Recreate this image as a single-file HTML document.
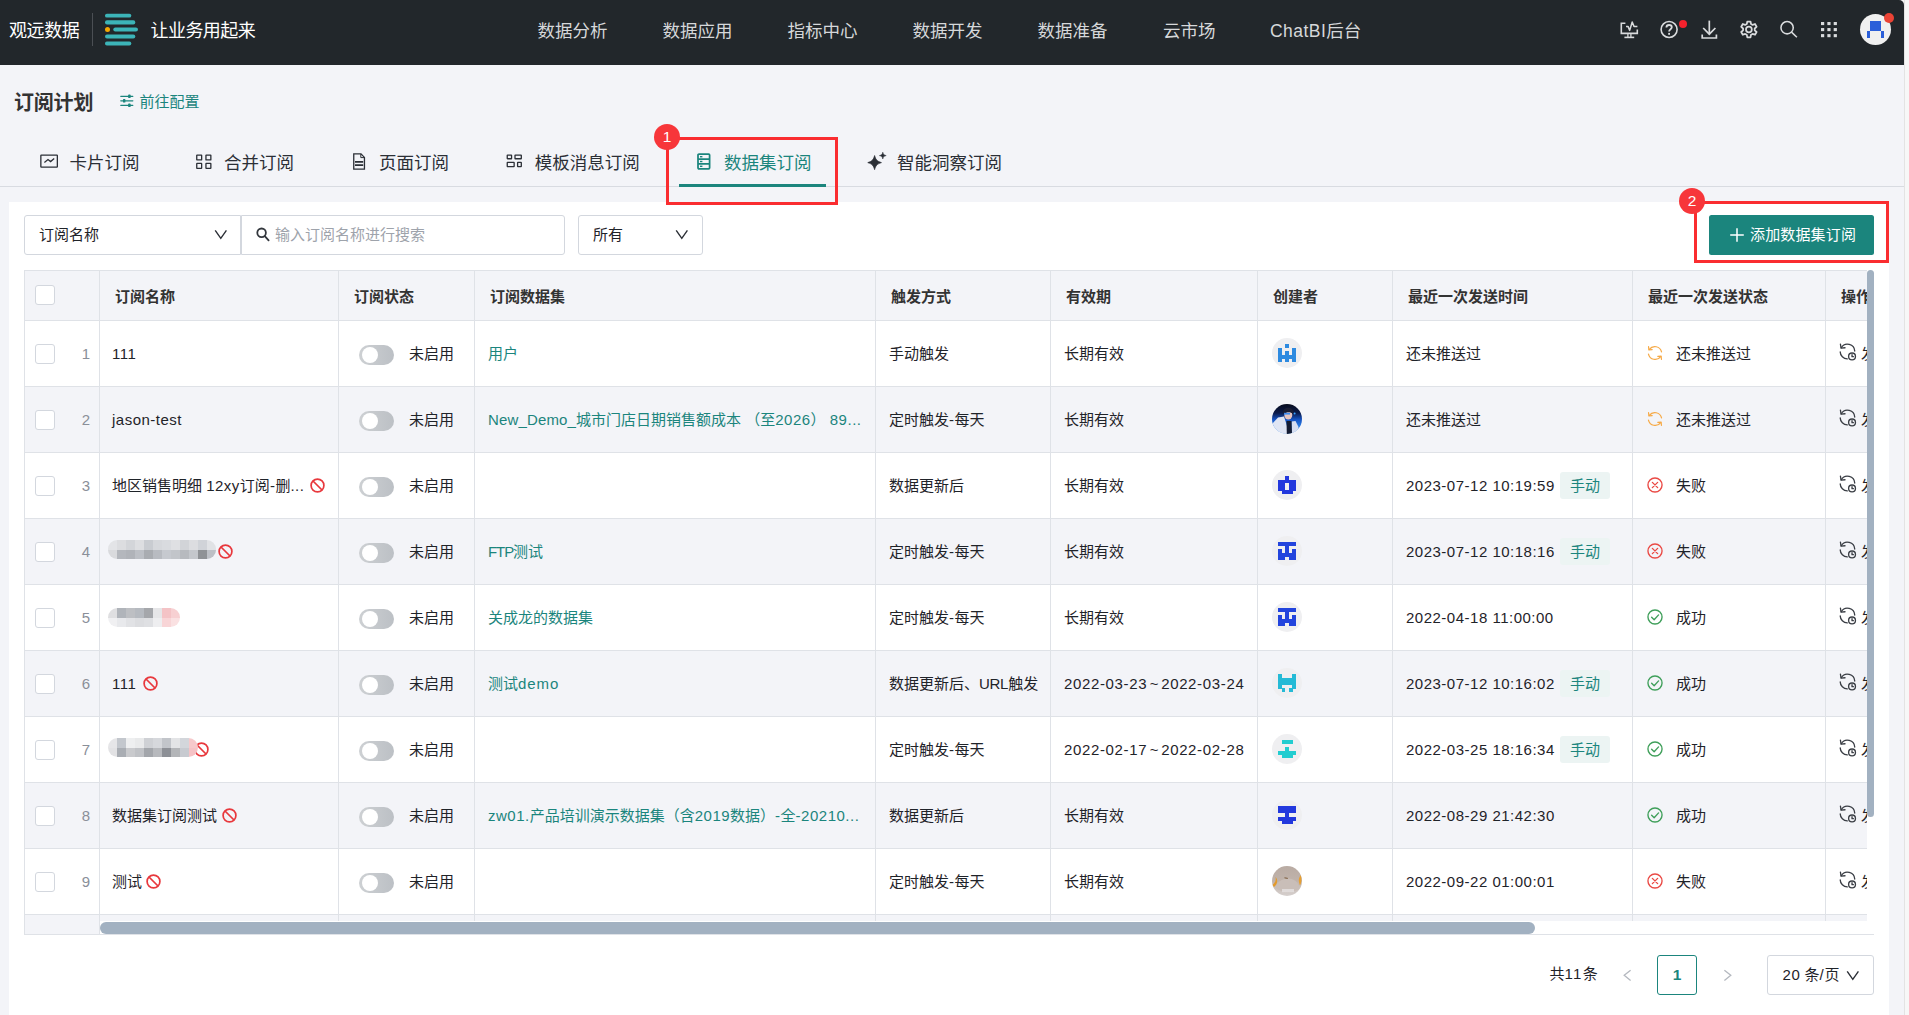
<!DOCTYPE html>
<html lang="zh-CN">
<head>
<meta charset="utf-8">
<title>订阅计划</title>
<style>
html,body{margin:0;padding:0;}
body{width:1909px;height:1015px;overflow:hidden;background:#f7f7f7;font-family:"Liberation Sans", "Noto Sans CJK SC", sans-serif;position:relative;}
.a{position:absolute;box-sizing:border-box;}
.t{position:absolute;white-space:nowrap;}
#page{position:absolute;left:0;top:0;width:1904px;height:1015px;background:#f3f4f8;overflow:hidden;border-top-right-radius:5px;}
#edge{position:absolute;left:1904px;top:0;width:1px;height:1015px;background:#e3e3e3;}
</style>
</head>
<body>
<div id="page">
<div class="a" style="left:0px;top:0px;width:1904px;height:65px;background:#22272b;"></div>
<span class="t" style="left:9px;top:19.50px;font-size:18px;line-height:22px;color:#ffffff;letter-spacing:-0.4px;">观远数据</span>
<div class="a" style="left:92px;top:13px;width:1px;height:33px;background:#4b4f54;"></div>
<svg class="a" style="left:104px;top:13px;" width="35" height="34" viewBox="0 0 35 34" fill="none"><g fill="#3cb4b8"><rect x="1" y="0.7" width="26.3" height="3.9" rx="1.9"/><rect x="1" y="7.3" width="30.3" height="4.1" rx="2"/><rect x="9.3" y="14.4" width="24.7" height="4.2" rx="2.1"/><rect x="1" y="21.5" width="30.3" height="4.1" rx="2"/><rect x="1" y="28.6" width="26.3" height="3.9" rx="1.9"/></g><circle cx="3.5" cy="16.5" r="2.5" fill="#f6a800"/></svg>
<span class="t" style="left:150.5px;top:19.50px;font-size:18px;line-height:22px;color:#ffffff;letter-spacing:-0.55px;">让业务用起来</span>
<span class="t" style="left:537.5px;top:19.50px;font-size:17.5px;line-height:22px;color:#d6d8da;">数据分析</span>
<span class="t" style="left:662.5px;top:19.50px;font-size:17.5px;line-height:22px;color:#d6d8da;">数据应用</span>
<span class="t" style="left:787.5px;top:19.50px;font-size:17.5px;line-height:22px;color:#d6d8da;">指标中心</span>
<span class="t" style="left:912.5px;top:19.50px;font-size:17.5px;line-height:22px;color:#d6d8da;">数据开发</span>
<span class="t" style="left:1037.5px;top:19.50px;font-size:17.5px;line-height:22px;color:#d6d8da;">数据准备</span>
<span class="t" style="left:1163px;top:19.50px;font-size:17.5px;line-height:22px;color:#d6d8da;">云市场</span>
<span class="t" style="left:1270px;top:19.50px;font-size:17.5px;line-height:22px;color:#d6d8da;"><span style="letter-spacing:.45px">ChatBI</span>后台</span>
<svg class="a" style="left:1619px;top:20px;" width="21" height="20" viewBox="0 0 21 20" fill="none"><g stroke="#d9dbdd" stroke-width="1.6" fill="none" stroke-linecap="butt" stroke-linejoin="miter"><path d="M6.4 3.2H2.3V13.4H18.3V9.6"/><path d="M8.9 13.6V17M11.9 13.6V17" stroke-width="1.3"/><path d="M5.4 17.4H15.2"/><path d="M7 6.4H9L10.7 10.4L13.2 2L15 6.4H18.4" stroke-width="1.5" stroke-linejoin="round"/></g></svg>
<svg class="a" style="left:1659px;top:20px;" width="21" height="20" viewBox="0 0 21 20" fill="none"><circle cx="10.1" cy="9.5" r="8" stroke="#d9dbdd" stroke-width="1.6"/><path d="M7.4 7.5C7.4 5.9 8.6 5 10.1 5C11.7 5 12.8 5.9 12.8 7.3C12.8 9.1 10.1 9.4 10.1 11.5" stroke="#d9dbdd" stroke-width="1.8" fill="none" stroke-linecap="butt"/><rect x="9.2" y="12.9" width="1.8" height="1.9" fill="#d9dbdd"/></svg>
<div class="a" style="left:1679px;top:20px;width:8px;height:8px;background:#f5222d;border-radius:50%;"></div>
<svg class="a" style="left:1700px;top:19px;" width="19" height="21" viewBox="0 0 19 21" fill="none"><g stroke="#d9dbdd" stroke-width="1.7" fill="none" stroke-linecap="butt" stroke-linejoin="miter"><path d="M9.3 1.6V15"/><path d="M3.2 9L9.3 15.2L15.4 9"/><path d="M2.2 15.4V19H16.4V15.4"/></g></svg>
<svg class="a" style="left:1739px;top:20px;" width="20" height="20" viewBox="0 0 20 20" fill="none"><g stroke="#d9dbdd" stroke-width="1.75" fill="none" stroke-linejoin="round"><path d="M8.3 1.5h3.2l.5 2.5 1.6.9 2.4-.9 1.6 2.8-1.9 1.7v1.8l1.9 1.7-1.6 2.8-2.4-.9-1.6.9-.5 2.5H8.3l-.5-2.5-1.6-.9-2.4.9-1.6-2.8 1.9-1.7V8.5L2.2 6.8l1.6-2.8 2.4.9 1.6-.9z"/><circle cx="9.9" cy="9.4" r="2.9"/></g></svg>
<svg class="a" style="left:1779px;top:20px;" width="20" height="20" viewBox="0 0 20 20" fill="none"><g stroke="#d9dbdd" stroke-width="1.55" fill="none" stroke-linecap="butt"><circle cx="8.1" cy="7.7" r="6.15"/><path d="M12.5 12.1L17.9 17.2"/></g></svg>
<svg class="a" style="left:1821px;top:21.9px;" width="17" height="16" viewBox="0 0 17 16" fill="none"><rect x="0.00" y="0.00" width="3.2" height="3.1" fill="#d9dbdd"/><rect x="6.35" y="0.00" width="3.2" height="3.1" fill="#d9dbdd"/><rect x="12.70" y="0.00" width="3.2" height="3.1" fill="#d9dbdd"/><rect x="0.00" y="6.05" width="3.2" height="3.1" fill="#d9dbdd"/><rect x="6.35" y="6.05" width="3.2" height="3.1" fill="#d9dbdd"/><rect x="12.70" y="6.05" width="3.2" height="3.1" fill="#d9dbdd"/><rect x="0.00" y="12.10" width="3.2" height="3.1" fill="#d9dbdd"/><rect x="6.35" y="12.10" width="3.2" height="3.1" fill="#d9dbdd"/><rect x="12.70" y="12.10" width="3.2" height="3.1" fill="#d9dbdd"/></svg>
<div class="a" style="left:1860.2px;top:13.8px;width:31.2px;height:31.2px;background:#f0f0f0;border-radius:50%;"></div>
<div class="a" style="left:1870.1px;top:20.7px;width:11px;height:10.5px;background:#2b5fd9;"></div>
<div class="a" style="left:1866.5px;top:31.2px;width:3.6px;height:6.9px;background:#2b5fd9;"></div>
<div class="a" style="left:1881.1px;top:31.2px;width:3.3px;height:6.9px;background:#2b5fd9;"></div>
<div class="a" style="left:1884.2px;top:13.1px;width:10px;height:10px;background:#ea4335;border-radius:50%;"></div>
<span class="t" style="left:14px;top:91.90px;font-size:20px;line-height:22px;color:#333333;font-weight:700;letter-spacing:-0.2px;">订阅计划</span>
<svg class="a" style="left:120px;top:94.4px;" width="14" height="14" viewBox="0 0 14 14" fill="none"><g stroke="#1b857d" stroke-width="1.3" stroke-linecap="round"><path d="M0.8 2.3H12.8M0.8 6.8H12.8M0.8 11.3H12.8"/></g><g fill="#1b857d"><rect x="8.2" y="0.6" width="2.4" height="3.4" rx=".6"/><rect x="3" y="5.1" width="2.4" height="3.4" rx=".6"/><rect x="8.2" y="9.6" width="2.4" height="3.4" rx=".6"/></g></svg>
<span class="t" style="left:139.5px;top:90.80px;font-size:15px;line-height:22px;color:#1b857d;">前往配置</span>
<div class="a" style="left:0px;top:186px;width:1904px;height:1px;background:#d8dbe1;"></div>
<svg class="a" style="left:40px;top:154px;" width="19" height="15" viewBox="0 0 19 15" fill="none"><g stroke="#2b2f36" stroke-width="1.3" fill="none" stroke-linejoin="miter" stroke-linecap="butt"><rect x="0.85" y="1.05" width="16.5" height="12.1" rx=".5"/><path d="M4.4 8.4L8 5.6L10.6 7.6L14.2 4.6"/></g></svg>
<span class="t" style="left:69.5px;top:152.10px;font-size:17.5px;line-height:22px;color:#2b2f36;">卡片订阅</span>
<svg class="a" style="left:196px;top:154px;" width="17" height="17" viewBox="0 0 17 17" fill="none"><g stroke="#2b2f36" stroke-width="1.3" fill="none"><rect x="0.75" y="1.05" width="4.9" height="4.9" rx=".3"/><rect x="9.95" y="1.05" width="4.9" height="4.9" rx=".3"/><rect x="0.75" y="9.45" width="4.9" height="4.9" rx=".3"/><rect x="9.95" y="9.45" width="4.9" height="4.9" rx=".3"/></g></svg>
<span class="t" style="left:224px;top:152.10px;font-size:17.5px;line-height:22px;color:#2b2f36;">合并订阅</span>
<svg class="a" style="left:352px;top:153px;" width="15" height="18" viewBox="0 0 15 18" fill="none"><g stroke="#2b2f36" stroke-width="1.3" fill="none" stroke-linejoin="miter"><path d="M1.75 0.85H9L12.45 4.4V16.05H1.75Z"/><path d="M8.8 1V4.6H12.3" stroke-width="1"/></g><path d="M3 8.8H11.2M3 12.2H11.2" stroke="#2b2f36" stroke-width="1.7"/></svg>
<span class="t" style="left:379px;top:152.10px;font-size:17.5px;line-height:22px;color:#2b2f36;">页面订阅</span>
<svg class="a" style="left:506px;top:153px;" width="18" height="17" viewBox="0 0 18 17" fill="none"><g stroke="#2b2f36" stroke-width="1.3" fill="none"><rect x="1.25" y="2.05" width="4.3" height="3.7" rx=".3"/><rect x="9" y="2.05" width="6.3" height="3.7" rx=".3"/><rect x="1.25" y="9.45" width="6.9" height="4.2" rx=".3"/><rect x="11.6" y="9.45" width="3.7" height="4.2" rx=".3"/></g></svg>
<span class="t" style="left:534.7px;top:152.10px;font-size:17.5px;line-height:22px;color:#2b2f36;">模板消息订阅</span>
<svg class="a" style="left:697px;top:153px;" width="15" height="18" viewBox="0 0 15 18" fill="none"><g stroke="#1b857d" stroke-width="1.75" fill="none" stroke-linejoin="round"><rect x="1" y="1" width="11.6" height="14.8" rx="1"/><path d="M1 6H12.6M1 10.8H12.6"/></g><g fill="#1b857d"><rect x="3" y="3" width="2.4" height="1.4"/><rect x="3" y="7.8" width="2.4" height="1.4"/><rect x="3" y="12.6" width="2.4" height="1.4"/></g></svg>
<span class="t" style="left:724px;top:152.10px;font-size:17.5px;line-height:22px;color:#1b857d;">数据集订阅</span>
<div class="a" style="left:679px;top:184px;width:147px;height:3px;background:#1b857d;"></div>
<svg class="a" style="left:866px;top:151px;" width="22" height="21" viewBox="0 0 22 21" fill="none"><path d="M8.6 4.6C9.6 8.6 11 10.2 15.4 11.6C11 13 9.6 14.6 8.6 18.6C7.6 14.6 6.2 13 1.8 11.6C6.2 10.2 7.6 8.6 8.6 4.6Z" fill="#2b2f36" stroke="#2b2f36" stroke-width=".8" stroke-linejoin="round"/><path d="M16.8 1.2C17.3 3.4 18 4 20.2 4.6C18 5.2 17.3 5.8 16.8 8C16.3 5.8 15.6 5.2 13.4 4.6C15.6 4 16.3 3.4 16.8 1.2Z" fill="#2b2f36" stroke="#2b2f36" stroke-width=".5" stroke-linejoin="round"/></svg>
<span class="t" style="left:897px;top:152.10px;font-size:17.5px;line-height:22px;color:#2b2f36;">智能洞察订阅</span>
<div class="a" style="left:9px;top:202px;width:1880px;height:820px;background:#ffffff;"></div>
<div class="a" style="left:24px;top:215px;width:217px;height:40px;background:#fff;border:1px solid #d3d7de;border-radius:3px 0 0 3px;"></div>
<span class="t" style="left:39px;top:224.30px;font-size:15px;line-height:22px;color:#1f2329;">订阅名称</span>
<svg class="a" style="left:214px;top:229px;" width="14" height="11" viewBox="0 0 14 11" fill="none"><path d="M1.2 1.4L6.8 9.4L12.4 1.4" stroke="#2b2f36" stroke-width="1.4" fill="none" stroke-linejoin="miter"/></svg>
<div class="a" style="left:241px;top:215px;width:324px;height:40px;background:#fff;border:1px solid #d3d7de;border-radius:0 3px 3px 0;"></div>
<svg class="a" style="left:256px;top:227px;" width="14" height="15" viewBox="0 0 14 15" fill="none"><g stroke="#33373d" stroke-width="1.8" fill="none" stroke-linecap="round"><circle cx="5.6" cy="5.8" r="4.3"/><path d="M8.8 9.2L12.6 13.4"/></g></svg>
<span class="t" style="left:275px;top:224.30px;font-size:15px;line-height:22px;color:#9ea3ab;">输入订阅名称进行搜索</span>
<div class="a" style="left:578px;top:215px;width:125px;height:40px;background:#fff;border:1px solid #d3d7de;border-radius:3px;"></div>
<span class="t" style="left:593px;top:224.30px;font-size:15px;line-height:22px;color:#1f2329;">所有</span>
<svg class="a" style="left:675px;top:229px;" width="14" height="11" viewBox="0 0 14 11" fill="none"><path d="M1.2 1.4L6.8 9.4L12.4 1.4" stroke="#2b2f36" stroke-width="1.4" fill="none"/></svg>
<div class="a" style="left:1709px;top:215px;width:165px;height:40px;background:#1b857d;border-radius:2.5px;"></div>
<svg class="a" style="left:1729px;top:227px;" width="16" height="16" viewBox="0 0 16 16" fill="none"><path d="M8 1.2V14.8M1.2 8H14.8" stroke="#fff" stroke-width="1.5"/></svg>
<span class="t" style="left:1750px;top:223.50px;font-size:15px;line-height:22px;color:#ffffff;letter-spacing:0.15px;">添加数据集订阅</span>
<div class="a" style="left:666px;top:137px;width:172px;height:68px;border:3px solid #fa2d30;"></div>
<div class="a" style="left:654px;top:124px;width:26px;height:26px;background:#f7363a;border-radius:50%;"></div>
<span class="t" style="left:0px;top:126.20px;font-size:15.5px;line-height:22px;color:#ffffff;left:654px;width:26px;text-align:center;">1</span>
<div class="a" style="left:1694px;top:201px;width:195px;height:62px;border:3px solid #fa2d30;"></div>
<div class="a" style="left:1679px;top:188px;width:26px;height:26px;background:#f7363a;border-radius:50%;"></div>
<span class="t" style="left:0px;top:190.20px;font-size:15.5px;line-height:22px;color:#ffffff;left:1679px;width:26px;text-align:center;">2</span>
<div class="a" style="left:24px;top:270px;width:1843px;height:665px;overflow:hidden;">
<div class="a" style="left:0px;top:0px;width:1843px;height:51px;background:#f3f4f8;"></div>
<div class="a" style="left:0px;top:117px;width:1843px;height:65px;background:#f3f4f8;"></div>
<div class="a" style="left:0px;top:249px;width:1843px;height:65px;background:#f3f4f8;"></div>
<div class="a" style="left:0px;top:381px;width:1843px;height:65px;background:#f3f4f8;"></div>
<div class="a" style="left:0px;top:513px;width:1843px;height:65px;background:#f3f4f8;"></div>
<div class="a" style="left:0px;top:645px;width:1843px;height:65px;background:#f3f4f8;"></div>
<div class="a" style="left:0px;top:645px;width:75px;height:20px;background:#f3f4f8;"></div>
<div class="a" style="left:0px;top:0px;width:1843px;height:1px;background:#dfe2e7;"></div>
<div class="a" style="left:0px;top:50px;width:1843px;height:1px;background:#dfe2e7;"></div>
<div class="a" style="left:0px;top:116px;width:1843px;height:1px;background:#dfe2e7;"></div>
<div class="a" style="left:0px;top:182px;width:1843px;height:1px;background:#dfe2e7;"></div>
<div class="a" style="left:0px;top:248px;width:1843px;height:1px;background:#dfe2e7;"></div>
<div class="a" style="left:0px;top:314px;width:1843px;height:1px;background:#dfe2e7;"></div>
<div class="a" style="left:0px;top:380px;width:1843px;height:1px;background:#dfe2e7;"></div>
<div class="a" style="left:0px;top:446px;width:1843px;height:1px;background:#dfe2e7;"></div>
<div class="a" style="left:0px;top:512px;width:1843px;height:1px;background:#dfe2e7;"></div>
<div class="a" style="left:0px;top:578px;width:1843px;height:1px;background:#dfe2e7;"></div>
<div class="a" style="left:0px;top:644px;width:1843px;height:1px;background:#dfe2e7;"></div>
<div class="a" style="left:0px;top:0px;width:1px;height:665px;background:#dfe2e7;"></div>
<div class="a" style="left:75px;top:0px;width:1px;height:665px;background:#dfe2e7;"></div>
<div class="a" style="left:314px;top:0px;width:1px;height:652px;background:#dfe2e7;"></div>
<div class="a" style="left:450px;top:0px;width:1px;height:652px;background:#dfe2e7;"></div>
<div class="a" style="left:851px;top:0px;width:1px;height:652px;background:#dfe2e7;"></div>
<div class="a" style="left:1026px;top:0px;width:1px;height:652px;background:#dfe2e7;"></div>
<div class="a" style="left:1233px;top:0px;width:1px;height:652px;background:#dfe2e7;"></div>
<div class="a" style="left:1368px;top:0px;width:1px;height:652px;background:#dfe2e7;"></div>
<div class="a" style="left:1608px;top:0px;width:1px;height:652px;background:#dfe2e7;"></div>
<div class="a" style="left:1801px;top:0px;width:1px;height:652px;background:#dfe2e7;"></div>
<div class="a" style="left:76px;top:651px;width:1767px;height:14px;background:#fff;"></div>
<div class="a" style="left:76px;top:652px;width:1435px;height:12px;background:#a2b1c1;border-radius:6px;"></div>
<div class="a" style="left:11px;top:15px;width:20px;height:20px;background:#fff;border:1px solid #d3d7de;border-radius:3px;"></div>
<span class="t" style="left:91px;top:15.60px;font-size:15px;line-height:22px;color:#333333;font-weight:700;">订阅名称</span>
<span class="t" style="left:330px;top:15.60px;font-size:15px;line-height:22px;color:#333333;font-weight:700;">订阅状态</span>
<span class="t" style="left:466px;top:15.60px;font-size:15px;line-height:22px;color:#333333;font-weight:700;">订阅数据集</span>
<span class="t" style="left:867px;top:15.60px;font-size:15px;line-height:22px;color:#333333;font-weight:700;">触发方式</span>
<span class="t" style="left:1042px;top:15.60px;font-size:15px;line-height:22px;color:#333333;font-weight:700;">有效期</span>
<span class="t" style="left:1249px;top:15.60px;font-size:15px;line-height:22px;color:#333333;font-weight:700;">创建者</span>
<span class="t" style="left:1384px;top:15.60px;font-size:15px;line-height:22px;color:#333333;font-weight:700;">最近一次发送时间</span>
<span class="t" style="left:1624px;top:15.60px;font-size:15px;line-height:22px;color:#333333;font-weight:700;">最近一次发送状态</span>
<span class="t" style="left:1817px;top:15.60px;font-size:15px;line-height:22px;color:#333333;font-weight:700;">操作</span>
<div class="a" style="left:11px;top:74.0px;width:20px;height:20px;background:#fff;border:1px solid #d3d7de;border-radius:3px;"></div>
<span class="t" style="left:-24px;top:72.80px;font-size:15px;line-height:22px;color:#8a8f99;left:36px;width:30px;text-align:right;">1</span>
<span class="t" style="left:88px;top:72.80px;font-size:15px;line-height:22px;color:#1f2329;"><span style="letter-spacing:.5px">111</span></span>
<div class="a" style="left:335px;top:75.0px;width:35px;height:20px;background:linear-gradient(90deg,#cdd0d3,#bcc0c5);border-radius:10px;"></div>
<div class="a" style="left:337.5px;top:77.0px;width:16px;height:16px;background:#fff;border-radius:50%;"></div>
<span class="t" style="left:385px;top:72.80px;font-size:15px;line-height:22px;color:#1f2329;">未启用</span>
<span class="t" style="left:464px;top:72.80px;font-size:15px;line-height:22px;color:#1b857d;">用户</span>
<span class="t" style="left:865px;top:72.80px;font-size:15px;line-height:22px;color:#1f2329;">手动触发</span>
<span class="t" style="left:1040px;top:72.80px;font-size:15px;line-height:22px;color:#1f2329;">长期有效</span>
<div class="a" style="left:1248px;top:68.0px;width:30px;height:30px;background:#efeff1;border-radius:50%;"></div>
<div class="a" style="left:1261.2px;top:74.0px;width:3.8px;height:3.8000000000000003px;background:#2d8ae0;"></div>
<div class="a" style="left:1254.0px;top:77.60000000000002px;width:3.8px;height:3.8000000000000003px;background:#2d8ae0;"></div>
<div class="a" style="left:1268.4px;top:77.60000000000002px;width:3.8px;height:3.8000000000000003px;background:#2d8ae0;"></div>
<div class="a" style="left:1254.0px;top:81.19999999999999px;width:3.8px;height:3.8000000000000003px;background:#2d8ae0;"></div>
<div class="a" style="left:1261.2px;top:81.19999999999999px;width:3.8px;height:3.8000000000000003px;background:#2d8ae0;"></div>
<div class="a" style="left:1268.4px;top:81.19999999999999px;width:3.8px;height:3.8000000000000003px;background:#2d8ae0;"></div>
<div class="a" style="left:1254.0px;top:84.80000000000001px;width:18.2px;height:3.8000000000000003px;background:#2d8ae0;"></div>
<div class="a" style="left:1254.0px;top:88.39999999999998px;width:3.8px;height:3.8000000000000003px;background:#2d8ae0;"></div>
<div class="a" style="left:1261.2px;top:88.39999999999998px;width:3.8px;height:3.8000000000000003px;background:#2d8ae0;"></div>
<div class="a" style="left:1268.4px;top:88.39999999999998px;width:3.8px;height:3.8000000000000003px;background:#2d8ae0;"></div>
<span class="t" style="left:1382px;top:72.80px;font-size:15px;line-height:22px;color:#1f2329;">还未推送过</span>
<svg class="a" style="left:1623px;top:74.5px;" width="16" height="16" viewBox="0 0 15.2 15.2" fill="none"><g transform="translate(15.2,0) scale(-1,1)" stroke="#f6a945" stroke-width="1.15" fill="none" stroke-linecap="round" stroke-linejoin="round"><path d="M1.4 6.6A6.5 6.5 0 0 1 13 4.2"/><path d="M13.7 1.6L13.4 4.7L10.3 4.4"/><path d="M13.8 8.6A6.5 6.5 0 0 1 2.2 11"/><path d="M1.5 13.6L1.8 10.5L4.9 10.8"/></g></svg>
<span class="t" style="left:1652px;top:72.80px;font-size:15px;line-height:22px;color:#1f2329;">还未推送过</span>
<svg class="a" style="left:1815px;top:73.0px;" width="18" height="18" viewBox="0 0 17.4 17.4" fill="none"><g stroke="#3a3e45" stroke-width="1.3" fill="none" stroke-linecap="round" stroke-linejoin="round"><path d="M2.2 4.6A7 7 0 0 1 15.2 7.8"/><path d="M1.4 1.2L2 5L5.8 4.6"/><path d="M1.2 8.6A7 7 0 0 0 8 15.4"/><circle cx="12.6" cy="13" r="3.3"/><path d="M12.6 11.4V13.2H13.9"/></g></svg>
<span class="t" style="left:1837px;top:72.80px;font-size:15px;line-height:22px;color:#1f2329;">发送</span>
<div class="a" style="left:11px;top:140.0px;width:20px;height:20px;background:#fff;border:1px solid #d3d7de;border-radius:3px;"></div>
<span class="t" style="left:-24px;top:138.80px;font-size:15px;line-height:22px;color:#8a8f99;left:36px;width:30px;text-align:right;">2</span>
<span class="t" style="left:88px;top:138.80px;font-size:15px;line-height:22px;color:#1f2329;"><span style="letter-spacing:.5px">jason-test</span></span>
<div class="a" style="left:335px;top:141.0px;width:35px;height:20px;background:linear-gradient(90deg,#cdd0d3,#bcc0c5);border-radius:10px;"></div>
<div class="a" style="left:337.5px;top:143.0px;width:16px;height:16px;background:#fff;border-radius:50%;"></div>
<span class="t" style="left:385px;top:138.80px;font-size:15px;line-height:22px;color:#1f2329;">未启用</span>
<span class="t" style="left:464px;top:138.80px;font-size:15px;line-height:22px;color:#1b857d;"><span style="letter-spacing:.15px">New_Demo_</span>城市门店日期销售额成本 （至<span style="letter-spacing:.5px">2026</span>） <span style="letter-spacing:.5px">89...</span></span>
<span class="t" style="left:865px;top:138.80px;font-size:15px;line-height:22px;color:#1f2329;">定时触发<span style="letter-spacing:.5px">-</span>每天</span>
<span class="t" style="left:1040px;top:138.80px;font-size:15px;line-height:22px;color:#1f2329;">长期有效</span>
<svg class="a" style="left:1248px;top:134.0px;" width="30" height="30" viewBox="0 0 30 30" fill="none"><defs><clipPath id="c1"><circle cx="15" cy="15" r="15"/></clipPath><linearGradient id="g1" x1="0" y1="0" x2="0" y2="1"><stop offset="0" stop-color="#070b1c"/><stop offset=".3" stop-color="#0b1a4a"/><stop offset=".52" stop-color="#1654c4"/><stop offset=".75" stop-color="#2a7be0"/><stop offset="1" stop-color="#7fb8f0"/></linearGradient></defs><g clip-path="url(#c1)"><rect width="30" height="30" fill="url(#g1)"/><path d="M0 20L6 13.5L12 12.5L15 22L15 30H0Z" fill="#dfe5f4"/><path d="M20 30L19.5 17.5L23.5 17L26.5 23L25 30Z" fill="#d5ddf0"/><path d="M14.5 17L19.5 17L20 30H14.8Z" fill="#141c33"/><ellipse cx="16.3" cy="11" rx="4" ry="4.6" fill="#e6c4c0"/><path d="M11 9C11 4 15 3 18 4C21 5 22 8 21 10C19 8 15 7.5 12 10Z" fill="#1a1d33"/><rect x="12" y="8.8" width="6" height="1.8" fill="#3f8cf0"/><circle cx="22.6" cy="9.4" r="1" fill="#3aa0ff"/></g></svg>
<span class="t" style="left:1382px;top:138.80px;font-size:15px;line-height:22px;color:#1f2329;">还未推送过</span>
<svg class="a" style="left:1623px;top:140.5px;" width="16" height="16" viewBox="0 0 15.2 15.2" fill="none"><g transform="translate(15.2,0) scale(-1,1)" stroke="#f6a945" stroke-width="1.15" fill="none" stroke-linecap="round" stroke-linejoin="round"><path d="M1.4 6.6A6.5 6.5 0 0 1 13 4.2"/><path d="M13.7 1.6L13.4 4.7L10.3 4.4"/><path d="M13.8 8.6A6.5 6.5 0 0 1 2.2 11"/><path d="M1.5 13.6L1.8 10.5L4.9 10.8"/></g></svg>
<span class="t" style="left:1652px;top:138.80px;font-size:15px;line-height:22px;color:#1f2329;">还未推送过</span>
<svg class="a" style="left:1815px;top:139.0px;" width="18" height="18" viewBox="0 0 17.4 17.4" fill="none"><g stroke="#3a3e45" stroke-width="1.3" fill="none" stroke-linecap="round" stroke-linejoin="round"><path d="M2.2 4.6A7 7 0 0 1 15.2 7.8"/><path d="M1.4 1.2L2 5L5.8 4.6"/><path d="M1.2 8.6A7 7 0 0 0 8 15.4"/><circle cx="12.6" cy="13" r="3.3"/><path d="M12.6 11.4V13.2H13.9"/></g></svg>
<span class="t" style="left:1837px;top:138.80px;font-size:15px;line-height:22px;color:#1f2329;">发送</span>
<div class="a" style="left:11px;top:206.0px;width:20px;height:20px;background:#fff;border:1px solid #d3d7de;border-radius:3px;"></div>
<span class="t" style="left:-24px;top:204.80px;font-size:15px;line-height:22px;color:#8a8f99;left:36px;width:30px;text-align:right;">3</span>
<span class="t" style="left:88px;top:204.80px;font-size:15px;line-height:22px;color:#1f2329;">地区销售明细 <span style="letter-spacing:.5px">12xy</span>订阅<span style="letter-spacing:.5px">-</span>删<span style="letter-spacing:.5px">...</span></span>
<svg class="a" style="left:285.5px;top:207.7px;" width="15" height="15" viewBox="0 0 15 15" fill="none"><circle cx="7.5" cy="7.5" r="6.4" stroke="#e8383d" stroke-width="1.7"/><path d="M3 3L12 12" stroke="#e8383d" stroke-width="1.7"/></svg>
<div class="a" style="left:335px;top:207.0px;width:35px;height:20px;background:linear-gradient(90deg,#cdd0d3,#bcc0c5);border-radius:10px;"></div>
<div class="a" style="left:337.5px;top:209.0px;width:16px;height:16px;background:#fff;border-radius:50%;"></div>
<span class="t" style="left:385px;top:204.80px;font-size:15px;line-height:22px;color:#1f2329;">未启用</span>
<span class="t" style="left:865px;top:204.80px;font-size:15px;line-height:22px;color:#1f2329;">数据更新后</span>
<span class="t" style="left:1040px;top:204.80px;font-size:15px;line-height:22px;color:#1f2329;">长期有效</span>
<div class="a" style="left:1248px;top:200.0px;width:30px;height:30px;background:#efeff1;border-radius:50%;"></div>
<div class="a" style="left:1261.2px;top:206.0px;width:3.8px;height:3.8000000000000003px;background:#2238dd;"></div>
<div class="a" style="left:1254.0px;top:209.60000000000002px;width:18.2px;height:3.8000000000000003px;background:#2238dd;"></div>
<div class="a" style="left:1254.0px;top:213.2px;width:7.4px;height:3.8000000000000003px;background:#2238dd;"></div>
<div class="a" style="left:1264.8px;top:213.2px;width:7.4px;height:3.8000000000000003px;background:#2238dd;"></div>
<div class="a" style="left:1254.0px;top:216.8px;width:7.4px;height:3.8000000000000003px;background:#2238dd;"></div>
<div class="a" style="left:1264.8px;top:216.8px;width:7.4px;height:3.8000000000000003px;background:#2238dd;"></div>
<div class="a" style="left:1257.6px;top:220.39999999999998px;width:11.0px;height:3.8000000000000003px;background:#2238dd;"></div>
<span class="t" style="left:1382px;top:204.80px;font-size:15px;line-height:22px;color:#1f2329;"><span style="letter-spacing:.5px">2023-07-12 10:19:59</span></span>
<div class="a" style="left:1536px;top:202.0px;width:50px;height:27px;background:#ecf4f3;border-radius:3px;"></div>
<span class="t" style="left:1546px;top:204.80px;font-size:15px;line-height:22px;color:#1b857d;">手动</span>
<svg class="a" style="left:1623px;top:206.5px;" width="16" height="16" viewBox="0 0 15.2 15.2" fill="none"><circle cx="7.6" cy="7.6" r="6.7" stroke="#ea4a45" stroke-width="1.3"/><path d="M5.1 5.1L10.1 10.1M10.1 5.1L5.1 10.1" stroke="#ea4a45" stroke-width="1.3" stroke-linecap="round"/></svg>
<span class="t" style="left:1652px;top:204.80px;font-size:15px;line-height:22px;color:#1f2329;">失败</span>
<svg class="a" style="left:1815px;top:205.0px;" width="18" height="18" viewBox="0 0 17.4 17.4" fill="none"><g stroke="#3a3e45" stroke-width="1.3" fill="none" stroke-linecap="round" stroke-linejoin="round"><path d="M2.2 4.6A7 7 0 0 1 15.2 7.8"/><path d="M1.4 1.2L2 5L5.8 4.6"/><path d="M1.2 8.6A7 7 0 0 0 8 15.4"/><circle cx="12.6" cy="13" r="3.3"/><path d="M12.6 11.4V13.2H13.9"/></g></svg>
<span class="t" style="left:1837px;top:204.80px;font-size:15px;line-height:22px;color:#1f2329;">发送</span>
<div class="a" style="left:11px;top:272.0px;width:20px;height:20px;background:#fff;border:1px solid #d3d7de;border-radius:3px;"></div>
<span class="t" style="left:-24px;top:270.80px;font-size:15px;line-height:22px;color:#8a8f99;left:36px;width:30px;text-align:right;">4</span>
<div class="a" style="left:335px;top:273.0px;width:35px;height:20px;background:linear-gradient(90deg,#cdd0d3,#bcc0c5);border-radius:10px;"></div>
<div class="a" style="left:337.5px;top:275.0px;width:16px;height:16px;background:#fff;border-radius:50%;"></div>
<span class="t" style="left:385px;top:270.80px;font-size:15px;line-height:22px;color:#1f2329;">未启用</span>
<span class="t" style="left:464px;top:270.80px;font-size:15px;line-height:22px;color:#1b857d;"><span style="letter-spacing:-1.1px">FTP</span>测试</span>
<span class="t" style="left:865px;top:270.80px;font-size:15px;line-height:22px;color:#1f2329;">定时触发<span style="letter-spacing:.5px">-</span>每天</span>
<span class="t" style="left:1040px;top:270.80px;font-size:15px;line-height:22px;color:#1f2329;">长期有效</span>
<div class="a" style="left:1248px;top:266.0px;width:30px;height:30px;background:#efeff1;border-radius:50%;"></div>
<div class="a" style="left:1254.0px;top:272.0px;width:18.2px;height:3.8000000000000003px;background:#2244dd;"></div>
<div class="a" style="left:1261.2px;top:275.6px;width:3.8px;height:3.8000000000000003px;background:#2244dd;"></div>
<div class="a" style="left:1254.0px;top:279.20000000000005px;width:3.8px;height:3.8000000000000003px;background:#2244dd;"></div>
<div class="a" style="left:1261.2px;top:279.20000000000005px;width:3.8px;height:3.8000000000000003px;background:#2244dd;"></div>
<div class="a" style="left:1268.4px;top:279.20000000000005px;width:3.8px;height:3.8000000000000003px;background:#2244dd;"></div>
<div class="a" style="left:1254.0px;top:282.79999999999995px;width:18.2px;height:3.8000000000000003px;background:#2244dd;"></div>
<div class="a" style="left:1254.0px;top:286.4px;width:7.4px;height:3.8000000000000003px;background:#2244dd;"></div>
<div class="a" style="left:1264.8px;top:286.4px;width:7.4px;height:3.8000000000000003px;background:#2244dd;"></div>
<span class="t" style="left:1382px;top:270.80px;font-size:15px;line-height:22px;color:#1f2329;"><span style="letter-spacing:.5px">2023-07-12 10:18:16</span></span>
<div class="a" style="left:1536px;top:268.0px;width:50px;height:27px;background:#ecf4f3;border-radius:3px;"></div>
<span class="t" style="left:1546px;top:270.80px;font-size:15px;line-height:22px;color:#1b857d;">手动</span>
<svg class="a" style="left:1623px;top:272.5px;" width="16" height="16" viewBox="0 0 15.2 15.2" fill="none"><circle cx="7.6" cy="7.6" r="6.7" stroke="#ea4a45" stroke-width="1.3"/><path d="M5.1 5.1L10.1 10.1M10.1 5.1L5.1 10.1" stroke="#ea4a45" stroke-width="1.3" stroke-linecap="round"/></svg>
<span class="t" style="left:1652px;top:270.80px;font-size:15px;line-height:22px;color:#1f2329;">失败</span>
<svg class="a" style="left:1815px;top:271.0px;" width="18" height="18" viewBox="0 0 17.4 17.4" fill="none"><g stroke="#3a3e45" stroke-width="1.3" fill="none" stroke-linecap="round" stroke-linejoin="round"><path d="M2.2 4.6A7 7 0 0 1 15.2 7.8"/><path d="M1.4 1.2L2 5L5.8 4.6"/><path d="M1.2 8.6A7 7 0 0 0 8 15.4"/><circle cx="12.6" cy="13" r="3.3"/><path d="M12.6 11.4V13.2H13.9"/></g></svg>
<span class="t" style="left:1837px;top:270.80px;font-size:15px;line-height:22px;color:#1f2329;">发送</span>
<div class="a" style="left:11px;top:338.0px;width:20px;height:20px;background:#fff;border:1px solid #d3d7de;border-radius:3px;"></div>
<span class="t" style="left:-24px;top:336.80px;font-size:15px;line-height:22px;color:#8a8f99;left:36px;width:30px;text-align:right;">5</span>
<div class="a" style="left:335px;top:339.0px;width:35px;height:20px;background:linear-gradient(90deg,#cdd0d3,#bcc0c5);border-radius:10px;"></div>
<div class="a" style="left:337.5px;top:341.0px;width:16px;height:16px;background:#fff;border-radius:50%;"></div>
<span class="t" style="left:385px;top:336.80px;font-size:15px;line-height:22px;color:#1f2329;">未启用</span>
<span class="t" style="left:464px;top:336.80px;font-size:15px;line-height:22px;color:#1b857d;">关成龙的数据集</span>
<span class="t" style="left:865px;top:336.80px;font-size:15px;line-height:22px;color:#1f2329;">定时触发<span style="letter-spacing:.5px">-</span>每天</span>
<span class="t" style="left:1040px;top:336.80px;font-size:15px;line-height:22px;color:#1f2329;">长期有效</span>
<div class="a" style="left:1248px;top:332.0px;width:30px;height:30px;background:#efeff1;border-radius:50%;"></div>
<div class="a" style="left:1254.0px;top:338.0px;width:18.2px;height:3.8000000000000003px;background:#2244dd;"></div>
<div class="a" style="left:1261.2px;top:341.6px;width:3.8px;height:3.8000000000000003px;background:#2244dd;"></div>
<div class="a" style="left:1254.0px;top:345.20000000000005px;width:3.8px;height:3.8000000000000003px;background:#2244dd;"></div>
<div class="a" style="left:1261.2px;top:345.20000000000005px;width:3.8px;height:3.8000000000000003px;background:#2244dd;"></div>
<div class="a" style="left:1268.4px;top:345.20000000000005px;width:3.8px;height:3.8000000000000003px;background:#2244dd;"></div>
<div class="a" style="left:1254.0px;top:348.79999999999995px;width:18.2px;height:3.8000000000000003px;background:#2244dd;"></div>
<div class="a" style="left:1254.0px;top:352.4px;width:7.4px;height:3.8000000000000003px;background:#2244dd;"></div>
<div class="a" style="left:1264.8px;top:352.4px;width:7.4px;height:3.8000000000000003px;background:#2244dd;"></div>
<span class="t" style="left:1382px;top:336.80px;font-size:15px;line-height:22px;color:#1f2329;"><span style="letter-spacing:.5px">2022-04-18 11:00:00</span></span>
<svg class="a" style="left:1623px;top:338.5px;" width="16" height="16" viewBox="0 0 15.2 15.2" fill="none"><circle cx="7.6" cy="7.6" r="6.7" stroke="#3f9f5a" stroke-width="1.3"/><path d="M4.4 7.8L6.8 10.2L11 5.6" stroke="#3f9f5a" stroke-width="1.3" fill="none" stroke-linecap="round" stroke-linejoin="round"/></svg>
<span class="t" style="left:1652px;top:336.80px;font-size:15px;line-height:22px;color:#1f2329;">成功</span>
<svg class="a" style="left:1815px;top:337.0px;" width="18" height="18" viewBox="0 0 17.4 17.4" fill="none"><g stroke="#3a3e45" stroke-width="1.3" fill="none" stroke-linecap="round" stroke-linejoin="round"><path d="M2.2 4.6A7 7 0 0 1 15.2 7.8"/><path d="M1.4 1.2L2 5L5.8 4.6"/><path d="M1.2 8.6A7 7 0 0 0 8 15.4"/><circle cx="12.6" cy="13" r="3.3"/><path d="M12.6 11.4V13.2H13.9"/></g></svg>
<span class="t" style="left:1837px;top:336.80px;font-size:15px;line-height:22px;color:#1f2329;">发送</span>
<div class="a" style="left:11px;top:404.0px;width:20px;height:20px;background:#fff;border:1px solid #d3d7de;border-radius:3px;"></div>
<span class="t" style="left:-24px;top:402.80px;font-size:15px;line-height:22px;color:#8a8f99;left:36px;width:30px;text-align:right;">6</span>
<span class="t" style="left:88px;top:402.80px;font-size:15px;line-height:22px;color:#1f2329;"><span style="letter-spacing:.5px">111</span></span>
<svg class="a" style="left:119.0px;top:405.79999999999995px;" width="15" height="15" viewBox="0 0 15 15" fill="none"><circle cx="7.5" cy="7.5" r="6.4" stroke="#e8383d" stroke-width="1.7"/><path d="M3 3L12 12" stroke="#e8383d" stroke-width="1.7"/></svg>
<div class="a" style="left:335px;top:405.0px;width:35px;height:20px;background:linear-gradient(90deg,#cdd0d3,#bcc0c5);border-radius:10px;"></div>
<div class="a" style="left:337.5px;top:407.0px;width:16px;height:16px;background:#fff;border-radius:50%;"></div>
<span class="t" style="left:385px;top:402.80px;font-size:15px;line-height:22px;color:#1f2329;">未启用</span>
<span class="t" style="left:464px;top:402.80px;font-size:15px;line-height:22px;color:#1b857d;">测试<span style="letter-spacing:.95px">demo</span></span>
<span class="t" style="left:865px;top:402.80px;font-size:15px;line-height:22px;color:#1f2329;">数据更新后、<span style="letter-spacing:-.3px">URL</span>触发</span>
<span class="t" style="left:1040px;top:402.80px;font-size:15px;line-height:22px;color:#1f2329;"><span style="letter-spacing:.65px">2022-03-23</span><span style="word-spacing:-1.6px"> ~ </span><span style="letter-spacing:.65px">2022-03-24</span></span>
<div class="a" style="left:1248px;top:398.0px;width:30px;height:30px;background:#efeff1;border-radius:50%;"></div>
<div class="a" style="left:1254.0px;top:404.0px;width:3.8px;height:3.8000000000000003px;background:#25bad6;"></div>
<div class="a" style="left:1268.4px;top:404.0px;width:3.8px;height:3.8000000000000003px;background:#25bad6;"></div>
<div class="a" style="left:1254.0px;top:407.6px;width:18.2px;height:3.8000000000000003px;background:#25bad6;"></div>
<div class="a" style="left:1254.0px;top:411.20000000000005px;width:18.2px;height:3.8000000000000003px;background:#25bad6;"></div>
<div class="a" style="left:1254.0px;top:414.79999999999995px;width:3.8px;height:3.8000000000000003px;background:#25bad6;"></div>
<div class="a" style="left:1268.4px;top:414.79999999999995px;width:3.8px;height:3.8000000000000003px;background:#25bad6;"></div>
<div class="a" style="left:1257.6px;top:418.4px;width:3.8px;height:3.8000000000000003px;background:#25bad6;"></div>
<div class="a" style="left:1264.8px;top:418.4px;width:3.8px;height:3.8000000000000003px;background:#25bad6;"></div>
<span class="t" style="left:1382px;top:402.80px;font-size:15px;line-height:22px;color:#1f2329;"><span style="letter-spacing:.5px">2023-07-12 10:16:02</span></span>
<div class="a" style="left:1536px;top:400.0px;width:50px;height:27px;background:#ecf4f3;border-radius:3px;"></div>
<span class="t" style="left:1546px;top:402.80px;font-size:15px;line-height:22px;color:#1b857d;">手动</span>
<svg class="a" style="left:1623px;top:404.5px;" width="16" height="16" viewBox="0 0 15.2 15.2" fill="none"><circle cx="7.6" cy="7.6" r="6.7" stroke="#3f9f5a" stroke-width="1.3"/><path d="M4.4 7.8L6.8 10.2L11 5.6" stroke="#3f9f5a" stroke-width="1.3" fill="none" stroke-linecap="round" stroke-linejoin="round"/></svg>
<span class="t" style="left:1652px;top:402.80px;font-size:15px;line-height:22px;color:#1f2329;">成功</span>
<svg class="a" style="left:1815px;top:403.0px;" width="18" height="18" viewBox="0 0 17.4 17.4" fill="none"><g stroke="#3a3e45" stroke-width="1.3" fill="none" stroke-linecap="round" stroke-linejoin="round"><path d="M2.2 4.6A7 7 0 0 1 15.2 7.8"/><path d="M1.4 1.2L2 5L5.8 4.6"/><path d="M1.2 8.6A7 7 0 0 0 8 15.4"/><circle cx="12.6" cy="13" r="3.3"/><path d="M12.6 11.4V13.2H13.9"/></g></svg>
<span class="t" style="left:1837px;top:402.80px;font-size:15px;line-height:22px;color:#1f2329;">发送</span>
<div class="a" style="left:11px;top:470.0px;width:20px;height:20px;background:#fff;border:1px solid #d3d7de;border-radius:3px;"></div>
<span class="t" style="left:-24px;top:468.80px;font-size:15px;line-height:22px;color:#8a8f99;left:36px;width:30px;text-align:right;">7</span>
<div class="a" style="left:335px;top:471.0px;width:35px;height:20px;background:linear-gradient(90deg,#cdd0d3,#bcc0c5);border-radius:10px;"></div>
<div class="a" style="left:337.5px;top:473.0px;width:16px;height:16px;background:#fff;border-radius:50%;"></div>
<span class="t" style="left:385px;top:468.80px;font-size:15px;line-height:22px;color:#1f2329;">未启用</span>
<span class="t" style="left:865px;top:468.80px;font-size:15px;line-height:22px;color:#1f2329;">定时触发<span style="letter-spacing:.5px">-</span>每天</span>
<span class="t" style="left:1040px;top:468.80px;font-size:15px;line-height:22px;color:#1f2329;"><span style="letter-spacing:.65px">2022-02-17</span><span style="word-spacing:-1.6px"> ~ </span><span style="letter-spacing:.65px">2022-02-28</span></span>
<div class="a" style="left:1248px;top:464.0px;width:30px;height:30px;background:#efeff1;border-radius:50%;"></div>
<div class="a" style="left:1257.6px;top:470.0px;width:11.0px;height:3.8000000000000003px;background:#22cdd0;"></div>
<div class="a" style="left:1261.2px;top:477.20000000000005px;width:3.8px;height:3.8000000000000003px;background:#22cdd0;"></div>
<div class="a" style="left:1254.0px;top:480.79999999999995px;width:18.2px;height:3.8000000000000003px;background:#22cdd0;"></div>
<div class="a" style="left:1257.6px;top:484.4px;width:11.0px;height:3.8000000000000003px;background:#22cdd0;"></div>
<span class="t" style="left:1382px;top:468.80px;font-size:15px;line-height:22px;color:#1f2329;"><span style="letter-spacing:.5px">2022-03-25 18:16:34</span></span>
<div class="a" style="left:1536px;top:466.0px;width:50px;height:27px;background:#ecf4f3;border-radius:3px;"></div>
<span class="t" style="left:1546px;top:468.80px;font-size:15px;line-height:22px;color:#1b857d;">手动</span>
<svg class="a" style="left:1623px;top:470.5px;" width="16" height="16" viewBox="0 0 15.2 15.2" fill="none"><circle cx="7.6" cy="7.6" r="6.7" stroke="#3f9f5a" stroke-width="1.3"/><path d="M4.4 7.8L6.8 10.2L11 5.6" stroke="#3f9f5a" stroke-width="1.3" fill="none" stroke-linecap="round" stroke-linejoin="round"/></svg>
<span class="t" style="left:1652px;top:468.80px;font-size:15px;line-height:22px;color:#1f2329;">成功</span>
<svg class="a" style="left:1815px;top:469.0px;" width="18" height="18" viewBox="0 0 17.4 17.4" fill="none"><g stroke="#3a3e45" stroke-width="1.3" fill="none" stroke-linecap="round" stroke-linejoin="round"><path d="M2.2 4.6A7 7 0 0 1 15.2 7.8"/><path d="M1.4 1.2L2 5L5.8 4.6"/><path d="M1.2 8.6A7 7 0 0 0 8 15.4"/><circle cx="12.6" cy="13" r="3.3"/><path d="M12.6 11.4V13.2H13.9"/></g></svg>
<span class="t" style="left:1837px;top:468.80px;font-size:15px;line-height:22px;color:#1f2329;">发送</span>
<div class="a" style="left:11px;top:536.0px;width:20px;height:20px;background:#fff;border:1px solid #d3d7de;border-radius:3px;"></div>
<span class="t" style="left:-24px;top:534.80px;font-size:15px;line-height:22px;color:#8a8f99;left:36px;width:30px;text-align:right;">8</span>
<span class="t" style="left:88px;top:534.80px;font-size:15px;line-height:22px;color:#1f2329;">数据集订阅测试</span>
<svg class="a" style="left:197.5px;top:537.8px;" width="15" height="15" viewBox="0 0 15 15" fill="none"><circle cx="7.5" cy="7.5" r="6.4" stroke="#e8383d" stroke-width="1.7"/><path d="M3 3L12 12" stroke="#e8383d" stroke-width="1.7"/></svg>
<div class="a" style="left:335px;top:537.0px;width:35px;height:20px;background:linear-gradient(90deg,#cdd0d3,#bcc0c5);border-radius:10px;"></div>
<div class="a" style="left:337.5px;top:539.0px;width:16px;height:16px;background:#fff;border-radius:50%;"></div>
<span class="t" style="left:385px;top:534.80px;font-size:15px;line-height:22px;color:#1f2329;">未启用</span>
<span class="t" style="left:464px;top:534.80px;font-size:15px;line-height:22px;color:#1b857d;"><span style="letter-spacing:.5px">zw01.</span>产品培训演示数据集（含<span style="letter-spacing:.5px">2019</span>数据）<span style="letter-spacing:.5px">-</span>全<span style="letter-spacing:.5px">-20210...</span></span>
<span class="t" style="left:865px;top:534.80px;font-size:15px;line-height:22px;color:#1f2329;">数据更新后</span>
<span class="t" style="left:1040px;top:534.80px;font-size:15px;line-height:22px;color:#1f2329;">长期有效</span>
<div class="a" style="left:1248px;top:530.0px;width:30px;height:30px;background:#efeff1;border-radius:50%;"></div>
<div class="a" style="left:1254.0px;top:536.0px;width:18.2px;height:3.8000000000000003px;background:#2238dd;"></div>
<div class="a" style="left:1254.0px;top:539.6px;width:18.2px;height:3.8000000000000003px;background:#2238dd;"></div>
<div class="a" style="left:1261.2px;top:543.2px;width:3.8px;height:3.8000000000000003px;background:#2238dd;"></div>
<div class="a" style="left:1254.0px;top:546.8px;width:18.2px;height:3.8000000000000003px;background:#2238dd;"></div>
<div class="a" style="left:1257.6px;top:550.4px;width:11.0px;height:3.8000000000000003px;background:#2238dd;"></div>
<span class="t" style="left:1382px;top:534.80px;font-size:15px;line-height:22px;color:#1f2329;"><span style="letter-spacing:.5px">2022-08-29 21:42:30</span></span>
<svg class="a" style="left:1623px;top:536.5px;" width="16" height="16" viewBox="0 0 15.2 15.2" fill="none"><circle cx="7.6" cy="7.6" r="6.7" stroke="#3f9f5a" stroke-width="1.3"/><path d="M4.4 7.8L6.8 10.2L11 5.6" stroke="#3f9f5a" stroke-width="1.3" fill="none" stroke-linecap="round" stroke-linejoin="round"/></svg>
<span class="t" style="left:1652px;top:534.80px;font-size:15px;line-height:22px;color:#1f2329;">成功</span>
<svg class="a" style="left:1815px;top:535.0px;" width="18" height="18" viewBox="0 0 17.4 17.4" fill="none"><g stroke="#3a3e45" stroke-width="1.3" fill="none" stroke-linecap="round" stroke-linejoin="round"><path d="M2.2 4.6A7 7 0 0 1 15.2 7.8"/><path d="M1.4 1.2L2 5L5.8 4.6"/><path d="M1.2 8.6A7 7 0 0 0 8 15.4"/><circle cx="12.6" cy="13" r="3.3"/><path d="M12.6 11.4V13.2H13.9"/></g></svg>
<span class="t" style="left:1837px;top:534.80px;font-size:15px;line-height:22px;color:#1f2329;">发送</span>
<div class="a" style="left:11px;top:602.0px;width:20px;height:20px;background:#fff;border:1px solid #d3d7de;border-radius:3px;"></div>
<span class="t" style="left:-24px;top:600.80px;font-size:15px;line-height:22px;color:#8a8f99;left:36px;width:30px;text-align:right;">9</span>
<span class="t" style="left:88px;top:600.80px;font-size:15px;line-height:22px;color:#1f2329;">测试</span>
<svg class="a" style="left:122.0px;top:603.8px;" width="15" height="15" viewBox="0 0 15 15" fill="none"><circle cx="7.5" cy="7.5" r="6.4" stroke="#e8383d" stroke-width="1.7"/><path d="M3 3L12 12" stroke="#e8383d" stroke-width="1.7"/></svg>
<div class="a" style="left:335px;top:603.0px;width:35px;height:20px;background:linear-gradient(90deg,#cdd0d3,#bcc0c5);border-radius:10px;"></div>
<div class="a" style="left:337.5px;top:605.0px;width:16px;height:16px;background:#fff;border-radius:50%;"></div>
<span class="t" style="left:385px;top:600.80px;font-size:15px;line-height:22px;color:#1f2329;">未启用</span>
<span class="t" style="left:865px;top:600.80px;font-size:15px;line-height:22px;color:#1f2329;">定时触发<span style="letter-spacing:.5px">-</span>每天</span>
<span class="t" style="left:1040px;top:600.80px;font-size:15px;line-height:22px;color:#1f2329;">长期有效</span>
<svg class="a" style="left:1248px;top:596.0px;" width="30" height="30" viewBox="0 0 30 30" fill="none"><defs><clipPath id="c2"><circle cx="15" cy="15" r="15"/></clipPath><linearGradient id="g2" x1="0" y1="0" x2="0" y2="1"><stop offset="0" stop-color="#b9aba3"/><stop offset=".5" stop-color="#c0b3ab"/><stop offset="1" stop-color="#d6d0ce"/></linearGradient></defs><g clip-path="url(#c2)"><rect width="30" height="30" fill="url(#g2)"/><path d="M4 22C3 15 14 12 17 12.5C24 13 27 18 27 23C20 27 10 27 4 22Z" fill="#c9beb8"/><path d="M0.5 19C3 17 4.5 14 3.5 11C6 13 6 18 2 21Z" fill="#e39a2b"/><path d="M29 9C26 12 26.5 16 28 19.5C29.5 17 30 12 29 9Z" fill="#e8a030"/><path d="M12.5 11.8L15.8 12.4" stroke="#7a5a3a" stroke-width="1"/><rect x="10" y="23" width="12" height="3.2" fill="#e6e2e2" opacity=".8"/></g></svg>
<span class="t" style="left:1382px;top:600.80px;font-size:15px;line-height:22px;color:#1f2329;"><span style="letter-spacing:.5px">2022-09-22 01:00:01</span></span>
<svg class="a" style="left:1623px;top:602.5px;" width="16" height="16" viewBox="0 0 15.2 15.2" fill="none"><circle cx="7.6" cy="7.6" r="6.7" stroke="#ea4a45" stroke-width="1.3"/><path d="M5.1 5.1L10.1 10.1M10.1 5.1L5.1 10.1" stroke="#ea4a45" stroke-width="1.3" stroke-linecap="round"/></svg>
<span class="t" style="left:1652px;top:600.80px;font-size:15px;line-height:22px;color:#1f2329;">失败</span>
<svg class="a" style="left:1815px;top:601.0px;" width="18" height="18" viewBox="0 0 17.4 17.4" fill="none"><g stroke="#3a3e45" stroke-width="1.3" fill="none" stroke-linecap="round" stroke-linejoin="round"><path d="M2.2 4.6A7 7 0 0 1 15.2 7.8"/><path d="M1.4 1.2L2 5L5.8 4.6"/><path d="M1.2 8.6A7 7 0 0 0 8 15.4"/><circle cx="12.6" cy="13" r="3.3"/><path d="M12.6 11.4V13.2H13.9"/></g></svg>
<span class="t" style="left:1837px;top:600.80px;font-size:15px;line-height:22px;color:#1f2329;">发送</span>
<div class="a" style="left:84px;top:270px;width:108px;height:19px;border-radius:9px;overflow:hidden;"><div class="a" style="left:0px;top:0;width:9px;height:10px;background:#e3e4e7;"></div><div class="a" style="left:9px;top:0;width:9px;height:10px;background:#dcdde0;"></div><div class="a" style="left:18px;top:0;width:9px;height:10px;background:#d3d5d9;"></div><div class="a" style="left:27px;top:0;width:9px;height:10px;background:#dddee1;"></div><div class="a" style="left:36px;top:0;width:9px;height:10px;background:#c9ccd1;"></div><div class="a" style="left:45px;top:0;width:9px;height:10px;background:#d6d8dc;"></div><div class="a" style="left:54px;top:0;width:9px;height:10px;background:#d9dbdf;"></div><div class="a" style="left:63px;top:0;width:9px;height:10px;background:#dfe0e3;"></div><div class="a" style="left:72px;top:0;width:9px;height:10px;background:#d2d4d8;"></div><div class="a" style="left:81px;top:0;width:9px;height:10px;background:#dcdde0;"></div><div class="a" style="left:90px;top:0;width:9px;height:10px;background:#d0d3d8;"></div><div class="a" style="left:99px;top:0;width:9px;height:10px;background:#e0e2e5;"></div><div class="a" style="left:0px;top:10px;width:9px;height:9px;background:#d9dadd;"></div><div class="a" style="left:9px;top:10px;width:9px;height:9px;background:#b4b7bd;"></div><div class="a" style="left:18px;top:10px;width:9px;height:9px;background:#b0b3b9;"></div><div class="a" style="left:27px;top:10px;width:9px;height:9px;background:#bcbfc5;"></div><div class="a" style="left:36px;top:10px;width:9px;height:9px;background:#a9acb1;"></div><div class="a" style="left:45px;top:10px;width:9px;height:9px;background:#b8bbc1;"></div><div class="a" style="left:54px;top:10px;width:9px;height:9px;background:#c6c9cf;"></div><div class="a" style="left:63px;top:10px;width:9px;height:9px;background:#c2c5ca;"></div><div class="a" style="left:72px;top:10px;width:9px;height:9px;background:#b7babf;"></div><div class="a" style="left:81px;top:10px;width:9px;height:9px;background:#c4c7cc;"></div><div class="a" style="left:90px;top:10px;width:9px;height:9px;background:#8f9296;"></div><div class="a" style="left:99px;top:10px;width:9px;height:9px;background:#bdc0c6;"></div></div>
<svg class="a" style="left:193.5px;top:273.79999999999995px;" width="15" height="15" viewBox="0 0 15 15" fill="none"><circle cx="7.5" cy="7.5" r="6.4" stroke="#e8383d" stroke-width="1.7"/><path d="M3 3L12 12" stroke="#e8383d" stroke-width="1.7"/></svg>
<div class="a" style="left:84px;top:338px;width:72px;height:19px;border-radius:10px;overflow:hidden;"><div class="a" style="left:0px;top:0;width:9px;height:10px;background:#dfdfe1;"></div><div class="a" style="left:9px;top:0;width:9px;height:10px;background:#b0b4ba;"></div><div class="a" style="left:18px;top:0;width:9px;height:10px;background:#bdbfc3;"></div><div class="a" style="left:27px;top:0;width:9px;height:10px;background:#b6bac0;"></div><div class="a" style="left:36px;top:0;width:9px;height:10px;background:#a5a7ab;"></div><div class="a" style="left:45px;top:0;width:9px;height:10px;background:#e6e6e8;"></div><div class="a" style="left:54px;top:0;width:9px;height:10px;background:#f4c3c6;"></div><div class="a" style="left:63px;top:0;width:9px;height:10px;background:#f7d0d2;"></div><div class="a" style="left:0px;top:10px;width:9px;height:9px;background:#f0f0f2;"></div><div class="a" style="left:9px;top:10px;width:9px;height:9px;background:#e8e9ec;"></div><div class="a" style="left:18px;top:10px;width:9px;height:9px;background:#e1e2e5;"></div><div class="a" style="left:27px;top:10px;width:9px;height:9px;background:#dcdde0;"></div><div class="a" style="left:36px;top:10px;width:9px;height:9px;background:#dfe0e3;"></div><div class="a" style="left:45px;top:10px;width:9px;height:9px;background:#eeeef0;"></div><div class="a" style="left:54px;top:10px;width:9px;height:9px;background:#f8d5d7;"></div><div class="a" style="left:63px;top:10px;width:9px;height:9px;background:#fae1e2;"></div></div>
<svg class="a" style="left:169.5px;top:471.70000000000005px;" width="15" height="15" viewBox="0 0 15 15" fill="none"><circle cx="7.5" cy="7.5" r="6.4" stroke="#e8383d" stroke-width="1.7"/><path d="M3 3L12 12" stroke="#e8383d" stroke-width="1.7"/></svg>
<div class="a" style="left:84px;top:468px;width:90px;height:19px;border-radius:10px;overflow:hidden;"><div class="a" style="left:0px;top:0;width:9px;height:10px;background:#e6e6e8;"></div><div class="a" style="left:9px;top:0;width:9px;height:10px;background:#c3c7cd;"></div><div class="a" style="left:18px;top:0;width:9px;height:10px;background:#eeeff0;"></div><div class="a" style="left:27px;top:0;width:9px;height:10px;background:#e9eaeb;"></div><div class="a" style="left:36px;top:0;width:9px;height:10px;background:#cfd1d5;"></div><div class="a" style="left:45px;top:0;width:9px;height:10px;background:#d6d8dc;"></div><div class="a" style="left:54px;top:0;width:9px;height:10px;background:#c2c5ca;"></div><div class="a" style="left:63px;top:0;width:9px;height:10px;background:#e3e4e6;"></div><div class="a" style="left:72px;top:0;width:9px;height:10px;background:#d3d6db;"></div><div class="a" style="left:81px;top:0;width:9px;height:10px;background:#f6c9cb;"></div><div class="a" style="left:0px;top:10px;width:9px;height:9px;background:#e2e2e4;"></div><div class="a" style="left:9px;top:10px;width:9px;height:9px;background:#a9adb3;"></div><div class="a" style="left:18px;top:10px;width:9px;height:9px;background:#c9cacd;"></div><div class="a" style="left:27px;top:10px;width:9px;height:9px;background:#c0c2c6;"></div><div class="a" style="left:36px;top:10px;width:9px;height:9px;background:#a3a6ab;"></div><div class="a" style="left:45px;top:10px;width:9px;height:9px;background:#b7b9bd;"></div><div class="a" style="left:54px;top:10px;width:9px;height:9px;background:#8d9096;"></div><div class="a" style="left:63px;top:10px;width:9px;height:9px;background:#b3b5b8;"></div><div class="a" style="left:72px;top:10px;width:9px;height:9px;background:#c7cad0;"></div><div class="a" style="left:81px;top:10px;width:9px;height:9px;background:#f5c3c6;"></div></div>
</div>
<div class="a" style="left:1867px;top:270px;width:7px;height:547px;background:#a2b1c1;border-radius:3.5px;"></div>
<div class="a" style="left:24px;top:934px;width:1850px;height:1px;background:#dfe2e7;"></div>
<span class="t" style="left:1549.5px;top:963.00px;font-size:15px;line-height:22px;color:#1f2329;">共<span style="letter-spacing:1.3px">11</span>条</span>
<svg class="a" style="left:1622px;top:968px;" width="12" height="14" viewBox="0 0 12 14" fill="none"><path d="M8.6 2.2L2.2 7.3L8.6 12.4" stroke="#b4b8bf" stroke-width="1.3" fill="none"/></svg>
<div class="a" style="left:1657px;top:955px;width:40px;height:40px;background:#fff;border:1px solid #1b857d;border-radius:3px;"></div>
<span class="t" style="left:0px;top:964.00px;font-size:15.5px;line-height:22px;color:#1b857d;font-weight:700;left:1657px;width:40px;text-align:center;">1</span>
<svg class="a" style="left:1721px;top:968px;" width="12" height="14" viewBox="0 0 12 14" fill="none"><path d="M3.4 2.2L9.8 7.3L3.4 12.4" stroke="#b4b8bf" stroke-width="1.3" fill="none"/></svg>
<div class="a" style="left:1767px;top:955px;width:107px;height:40px;background:#fff;border:1px solid #d3d7de;border-radius:3px;"></div>
<span class="t" style="left:1782.5px;top:963.50px;font-size:15px;line-height:22px;color:#1f2329;"><span style="letter-spacing:.6px">20</span> 条<span style="letter-spacing:.8px">/</span>页</span>
<svg class="a" style="left:1845.5px;top:970px;" width="14" height="11" viewBox="0 0 14 11" fill="none"><path d="M1.2 1.4L6.8 9.4L12.4 1.4" stroke="#2b2f36" stroke-width="1.4" fill="none"/></svg>
</div>
<div id="edge"></div>
</body>
</html>
